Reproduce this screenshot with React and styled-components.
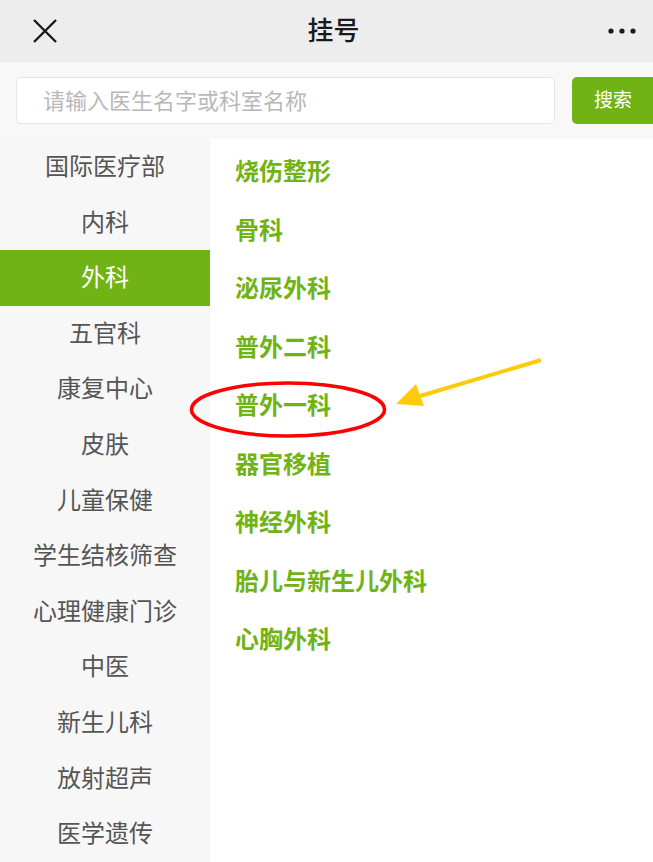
import React from 'react';
import styled, { createGlobalStyle } from 'styled-components';

const GlobalStyle = createGlobalStyle`
  html, body { margin: 0; padding: 0; background: #fff; }
  body { font-family: "Noto Sans CJK SC", "Noto Sans", sans-serif; }
`;

const GREEN = '#71b314';

const Page = styled.div`
  position: relative;
  width: 653px;
  height: 862px;
  overflow: hidden;
  display: flex;
  flex-direction: column;
`;

const Header = styled.div`
  height: 62px;
  background: #ededed;
  display: grid;
  grid-template-columns: 90px 1fr 90px;
  align-items: center;
`;

const Title = styled.div`
  text-align: center;
  font-size: 26px;
  font-weight: 500;
  color: #1a1a1a;
  padding: 0 0 4px 14px;
  line-height: 1;
`;

const IconBtn = styled.div`
  display: flex;
  justify-content: ${(p) => p.align};
  padding: ${(p) => (p.align === 'flex-start' ? '0 0 0 32px' : '0 16px 0 0')};
`;

const SearchBar = styled.div`
  height: 78px;
  background: #f8f8f8;
  display: flex;
  align-items: center;
  gap: 17px;
  padding-left: 16px;
`;

const Input = styled.div`
  flex: 1;
  height: 47px;
  box-sizing: border-box;
  background: #fff;
  border: 1px solid #e6e6e6;
  border-radius: 5px;
  display: flex;
  align-items: center;
  padding: 0 0 3px 26px;
  font-size: 22px;
  color: #b8b8b8;
`;

const SearchButton = styled.div`
  width: 81px;
  height: 47px;
  background: ${GREEN};
  border-radius: 5px 0 0 5px;
  color: #fff;
  font-size: 19px;
  display: flex;
  align-items: center;
  padding: 0 0 3px 22px;
  box-sizing: border-box;
`;

const Body = styled.div`
  flex: 1;
  display: flex;
`;

const Side = styled.div`
  width: 210px;
  background: #f7f7f7;
`;

const SideItem = styled.div`
  height: 55.6px;
  box-sizing: border-box;
  padding-bottom: 5px;
  display: flex;
  align-items: center;
  justify-content: center;
  font-size: 24px;
  color: ${(p) => (p.active ? '#fff' : '#555')};
  background: ${(p) => (p.active ? GREEN : 'transparent')};
`;

const List = styled.div`
  flex: 1;
  background: #fff;
  padding-top: 1px;
`;

const ListItem = styled.div`
  height: 58.5px;
  display: flex;
  align-items: center;
  padding-left: 25px;
  font-size: 24px;
  font-weight: 700;
  color: ${GREEN};
`;

const Overlay = styled.svg`
  position: absolute;
  left: 0;
  top: 0;
  pointer-events: none;
`;

const sides = ['国际医疗部', '内科', '外科', '五官科', '康复中心', '皮肤', '儿童保健', '学生结核筛查', '心理健康门诊', '中医', '新生儿科', '放射超声', '医学遗传'];
const depts = ['烧伤整形', '骨科', '泌尿外科', '普外二科', '普外一科', '器官移植', '神经外科', '胎儿与新生儿外科', '心胸外科'];

export default function App() {
  return (
    <Page>
      <GlobalStyle />
      <Header>
        <IconBtn align="flex-start">
          <svg width="26" height="26" viewBox="0 0 26 26">
            <path d="M2 2L24 24M24 2L2 24" stroke="#1a1a1a" strokeWidth="2.4" fill="none" />
          </svg>
        </IconBtn>
        <Title>挂号</Title>
        <IconBtn align="flex-end">
          <svg width="30" height="8" viewBox="0 0 30 8">
            <circle cx="4" cy="4" r="2.6" fill="#1a1a1a" />
            <circle cx="15" cy="4" r="2.6" fill="#1a1a1a" />
            <circle cx="26" cy="4" r="2.6" fill="#1a1a1a" />
          </svg>
        </IconBtn>
      </Header>
      <SearchBar>
        <Input>请输入医生名字或科室名称</Input>
        <SearchButton>搜索</SearchButton>
      </SearchBar>
      <Body>
        <Side>
          {sides.map((s) => (
            <SideItem key={s} active={s === '外科'}>{s}</SideItem>
          ))}
        </Side>
        <List>
          {depts.map((d) => (
            <ListItem key={d}>{d}</ListItem>
          ))}
        </List>
      </Body>
      <Overlay width="653" height="862" viewBox="0 0 653 862">
        <ellipse cx="288" cy="409.5" rx="96.5" ry="26.5" fill="none" stroke="#f00" strokeWidth="3.5" />
        <line x1="541" y1="360" x2="420" y2="396" stroke="#fecb0a" strokeWidth="4" />
        <polygon points="396,404 416,384 424,406" fill="#fecb0a" />
      </Overlay>
    </Page>
  );
}
